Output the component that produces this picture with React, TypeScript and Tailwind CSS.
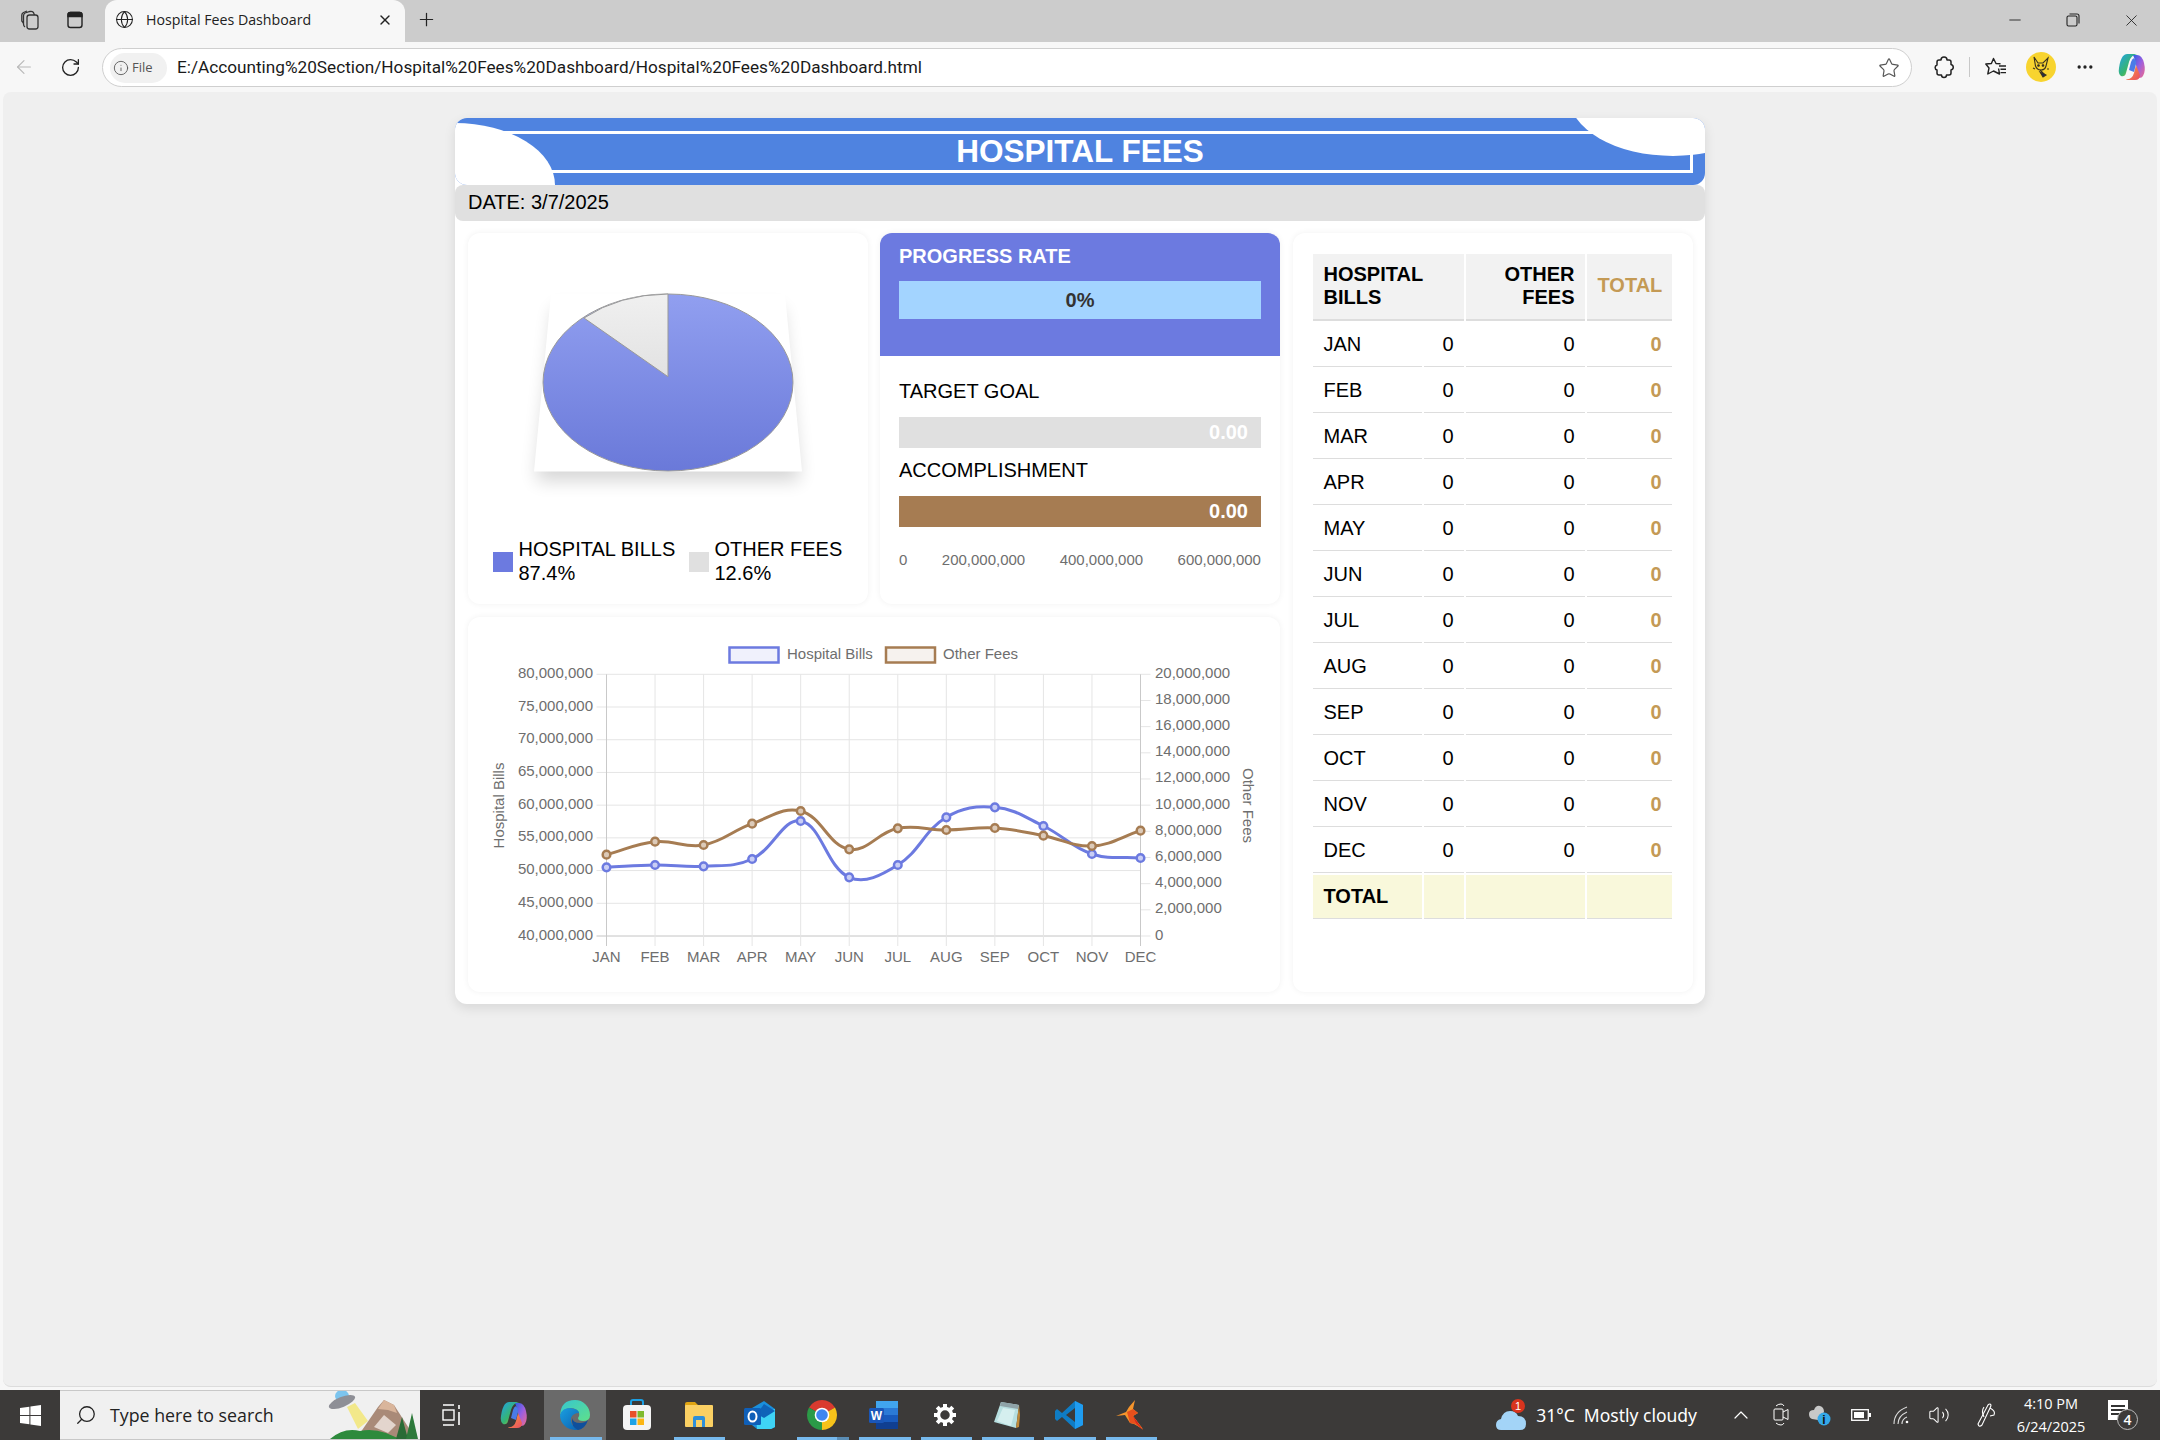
import React from "react";
import { ArrowLeft, RotateCw, Globe, X, Plus, Minus, Info, Star, MoreHorizontal, Search, ChevronUp, Volume2 } from "lucide-react";

const MONTHS = ["JAN", "FEB", "MAR", "APR", "MAY", "JUN", "JUL", "AUG", "SEP", "OCT", "NOV", "DEC"];

const OX = 468;
const OY = 617;
const PL = 606.5;
const PR = 1140.5;
const PT = 674.3;
const PB = 936;
const stepX = (PR - PL) / 11;
const blueZ = [742, 735, 739, 717, 603, 772, 735, 592, 562, 618, 702, 714];
const brownZ = [704, 665, 675, 611, 573, 688, 625, 630, 624, 647, 678, 632];

function pts(z: number[]) {
  return z.map((v, i) => ({ x: PL + i * stepX - OX, y: 620 + v / 3 - OY }));
}

function spline(p: { x: number; y: number }[], t = 0.4) {
  const cps = p.map((c, i) => {
    const a = p[Math.max(0, i - 1)];
    const b = p[Math.min(p.length - 1, i + 1)];
    const d01 = Math.hypot(c.x - a.x, c.y - a.y);
    const d12 = Math.hypot(b.x - c.x, b.y - c.y);
    const s = d01 + d12 || 1;
    return {
      px: c.x - (t * d01 / s) * (b.x - a.x),
      py: c.y - (t * d01 / s) * (b.y - a.y),
      nx: c.x + (t * d12 / s) * (b.x - a.x),
      ny: c.y + (t * d12 / s) * (b.y - a.y),
    };
  });
  let d = `M${p[0].x} ${p[0].y}`;
  for (let i = 1; i < p.length; i++) {
    d += ` C${cps[i - 1].nx} ${cps[i - 1].ny} ${cps[i].px} ${cps[i].py} ${p[i].x} ${p[i].y}`;
  }
  return d;
}

function LineChart() {
  const blue = pts(blueZ);
  const brown = pts(brownZ);
  const left = ["80,000,000", "75,000,000", "70,000,000", "65,000,000", "60,000,000", "55,000,000", "50,000,000", "45,000,000", "40,000,000"];
  const right = ["20,000,000", "18,000,000", "16,000,000", "14,000,000", "12,000,000", "10,000,000", "8,000,000", "6,000,000", "4,000,000", "2,000,000", "0"];
  const l = PL - OX, r = PR - OX, t = PT - OY, b = PB - OY;
  return (
    <svg width="812.5" height="375" viewBox="0 0 812.5 375" className="block" fontSize="15" fill="#6e6e6e">
      <rect x={261.5} y={30.5} width={49} height={15} fill="#f0f1fc" stroke="#6c7ae0" strokeWidth={2.5} />
      <text x={319} y={41.5}>Hospital Bills</text>
      <rect x={418} y={30.5} width={49} height={15} fill="#f6f2ee" stroke="#a67c52" strokeWidth={2.5} />
      <text x={475} y={41.5}>Other Fees</text>
      {left.map((s, i) => {
        const y = t + (i * (b - t)) / 8;
        return (
          <g key={s}>
            <line x1={l - 10} x2={r} y1={y} y2={y} stroke={i === 8 ? "#c4c4c4" : "#e5e5e5"} strokeWidth={1} />
            <text x={125} y={y + 3.5} textAnchor="end">{s}</text>
          </g>
        );
      })}
      {right.map((s, i) => {
        const y = t + (i * (b - t)) / 10;
        return (
          <g key={s}>
            <line x1={r} x2={r + 10} y1={y} y2={y} stroke="#e5e5e5" />
            <text x={687} y={y + 3.5}>{s}</text>
          </g>
        );
      })}
      {MONTHS.map((m, i) => {
        const x = l + i * stepX;
        return (
          <g key={m}>
            <line x1={x} x2={x} y1={t} y2={b + 10} stroke={i === 0 || i === 11 ? "#c9c9c9" : "#e5e5e5"} />
            <text x={x} y={344.5} textAnchor="middle">{m}</text>
          </g>
        );
      })}
      <text transform="translate(36 188.5) rotate(-90)" textAnchor="middle" fontSize="15">Hospital Bills</text>
      <text transform="translate(775 188.5) rotate(90)" textAnchor="middle" fontSize="15">Other Fees</text>
      <path d={spline(blue)} fill="none" stroke="#6c7ae0" strokeWidth={3} />
      <path d={spline(brown)} fill="none" stroke="#a67c52" strokeWidth={3} />
      {blue.map((p, i) => <circle key={i} cx={p.x} cy={p.y} r={3.8} fill="#c9cef5" stroke="#6c7ae0" strokeWidth={2.5} />)}
      {brown.map((p, i) => <circle key={i} cx={p.x} cy={p.y} r={3.8} fill="#dccab8" stroke="#a67c52" strokeWidth={2.5} />)}
    </svg>
  );
}

function Pie() {
  return (
    <svg width="400" height="297" viewBox="0 0 400 297" className="block">
      <defs>
        <linearGradient id="pieBlue" x1="0" y1="0" x2="0" y2="1">
          <stop offset="0" stopColor="#919ff0" />
          <stop offset="1" stopColor="#6a79d9" />
        </linearGradient>
        <linearGradient id="pieGray" x1="0" y1="0" x2="0" y2="1">
          <stop offset="0" stopColor="#f0f0f0" />
          <stop offset="1" stopColor="#e2e2e2" />
        </linearGradient>
        <filter id="pieShadow" x="-30%" y="-30%" width="160%" height="160%">
          <feGaussianBlur stdDeviation="9" />
        </filter>
      </defs>
      <polygon points="86,68 314,68 332,241 68,241" fill="#000" opacity="0.16" filter="url(#pieShadow)" transform="translate(0 7)" />
      <polygon points="83,61 317,61 334,238.5 66,238.5" fill="#fff" />
      <ellipse cx="200" cy="149.5" rx="125" ry="88.5" fill="url(#pieBlue)" stroke="#999" strokeWidth="1" />
      <path d="M200 61 A125 88.5 0 0 0 116 85 L200 143.7 Z" fill="url(#pieGray)" stroke="#999" strokeWidth="1" />
    </svg>
  );
}

function Hospital() {
  return (
    <div className="mx-auto mt-[26px] w-[1250px] rounded-xl bg-white shadow-[0_4px_12px_rgba(0,0,0,0.1)] font-['Liberation_Sans',Arial,sans-serif]">
      <div className="relative overflow-hidden rounded-xl bg-[#4f83e0] h-[67px] pt-[13px] px-[12px]">
        <div className="h-[42px] border-[3px] border-white flex items-center justify-center pb-[1px] text-white font-bold text-[31.5px] leading-none">
          HOSPITAL FEES
        </div>
        <div className="absolute left-[-100px] top-[5px] w-[200px] h-[124px] rounded-[50%] bg-white" />
        <div className="absolute right-[-72px] top-[-82px] w-[208px] h-[120px] rounded-[50%] bg-white" />
      </div>
      <div className="h-[36px] bg-[#e0e0e0] rounded-lg flex items-center pl-[13px] pb-[3px] text-[20px] text-black">DATE: 3/7/2025</div>
      <div className="grid grid-cols-[400px_400px_400px] grid-rows-[371px_375px] gap-x-[12.5px] gap-y-[13px] px-[12.5px] pt-[12px] pb-[12px]">
        <div className="rounded-xl bg-white shadow-[0_0_6px_rgba(0,0,0,0.06)]">
          <Pie />
          <div className="flex items-center pl-[25px] mt-[7px] text-[20px] leading-[24px] text-black">
            <span className="w-[20px] h-[20px] bg-[#6c7ae0] mr-[6px] mt-[2px]" />
            <span className="w-[155px] whitespace-nowrap">HOSPITAL BILLS<br />87.4%</span>
            <span className="w-[20px] h-[20px] bg-[#e0e0e0] ml-[15px] mr-[6px] mt-[2px]" />
            <span className="whitespace-nowrap">OTHER FEES<br />12.6%</span>
          </div>
        </div>

        <div className="rounded-xl bg-white shadow-[0_0_6px_rgba(0,0,0,0.06)] overflow-hidden">
          <div className="bg-[#6c7ae0] h-[123px] px-[19px] pt-[11.5px]">
            <div className="text-white font-bold text-[20px] leading-[23px]">PROGRESS RATE</div>
            <div className="mt-[13.5px] h-[38px] bg-[#a3d4ff] flex items-center justify-center text-[#333] font-bold text-[20px]">0%</div>
          </div>
          <div className="px-[19px] pt-[23.5px] text-black text-[20px] leading-[23px]">
            <div>TARGET GOAL</div>
            <div className="mt-[14.5px] h-[31px] bg-[#e0e0e0] flex items-center justify-end pr-[13px] pb-[1px] text-white font-bold">0.00</div>
            <div className="mt-[11px]">ACCOMPLISHMENT</div>
            <div className="mt-[14px] h-[31px] bg-[#a67c52] flex items-center justify-end pr-[13px] pb-[1px] text-white font-bold">0.00</div>
            <div className="mt-[24px] flex justify-between text-[15px] leading-[17px] text-[#6e6e6e]">
              <span>0</span><span>200,000,000</span><span>400,000,000</span><span>600,000,000</span>
            </div>
          </div>
        </div>

        <div className="row-span-2 rounded-xl bg-white shadow-[0_0_6px_rgba(0,0,0,0.06)] pl-[18px] pt-[19px]">
          <table className="w-[363px] table-fixed border-separate border-spacing-[2px] text-[20px] leading-[23px] text-black">
            <colgroup>
              <col className="w-[109px]" /><col className="w-[40px]" /><col className="w-[119px]" /><col className="w-[85px]" />
            </colgroup>
            <thead>
              <tr className="bg-[#f2f2f2] font-bold">
                <th colSpan={2} className="px-[11px] pt-[8.5px] pb-[10.5px] text-left border-b-2 border-[#ddd]">HOSPITAL<br />BILLS</th>
                <th className="pl-[11px] pr-[10px] pt-[8.5px] pb-[10.5px] text-right border-b-2 border-[#ddd]">OTHER<br />FEES</th>
                <th className="pl-[11px] pr-[10.5px] pt-[8.5px] pb-[10.5px] text-right border-b-2 border-[#ddd] text-[#c49a55]">TOTAL</th>
              </tr>
            </thead>
            <tbody>
              {MONTHS.map((m) => (
                <tr key={m}>
                  <td className="px-[11px] pt-[9.5px] pb-[10.5px] border-b border-[#ddd]">{m}</td>
                  <td className="pl-[11px] pr-[10px] pt-[9.5px] pb-[10.5px] border-b border-[#ddd] text-right">0</td>
                  <td className="pl-[11px] pr-[10px] pt-[9.5px] pb-[10.5px] border-b border-[#ddd] text-right">0</td>
                  <td className="pl-[11px] pr-[10px] pt-[9.5px] pb-[10.5px] border-b border-[#ddd] text-right font-bold text-[#c49a55]">0</td>
                </tr>
              ))}
              <tr className="bg-[#f9f8db] font-bold">
                <td className="px-[11px] pt-[9.5px] pb-[10.5px] border-b border-[#ddd]">TOTAL</td>
                <td className="py-[10px] border-b border-[#ddd]" />
                <td className="py-[10px] border-b border-[#ddd]" />
                <td className="py-[10px] border-b border-[#ddd]" />
              </tr>
            </tbody>
          </table>
        </div>

        <div className="col-span-2 rounded-xl bg-white shadow-[0_0_6px_rgba(0,0,0,0.06)] overflow-hidden">
          <LineChart />
        </div>
      </div>
    </div>
  );
}

function Workspaces() {
  return (
    <svg width="22" height="22" viewBox="0 0 22 22" fill="none" stroke="#333" strokeWidth="1.3">
      <rect x="8" y="6" width="11" height="14" rx="2.5" />
      <path d="M6 18 Q4.5 17 4.5 15 V7 Q4.5 5 6 4 L11 2.5 Q13 2 14.5 3.5 L15.5 6" />
      <path d="M4.5 14 L2.8 12 V6 Q2.8 4.5 4.5 3.5 L8 2" />
    </svg>
  );
}
function VerticalTabs() {
  return (
    <svg width="20" height="20" viewBox="0 0 20 20" fill="none" stroke="#222" strokeWidth="1.4">
      <rect x="3" y="2.5" width="14" height="15" rx="2.5" />
      <path d="M3 5 Q3 2.5 5.5 2.5 H14.5 Q17 2.5 17 5 V6.5 H3 Z" fill="#222" />
    </svg>
  );
}
function Restore() {
  return (
    <svg width="14" height="14" viewBox="0 0 14 14" fill="none" stroke="#222" strokeWidth="1.1">
      <rect x="1" y="3" width="10" height="10" rx="1.5" />
      <path d="M3.5 1 H11 Q13 1 13 3 V10.5" />
    </svg>
  );
}
function PuzzleIcon() {
  return (
    <svg width="24" height="24" viewBox="0 0 24 24" fill="none" stroke="#222" strokeWidth="1.5" strokeLinejoin="round">
      <path d="M9 5 A3 3 0 0 1 15 5 H17 A2 2 0 0 1 19 7 V9.5 A2.8 2.8 0 0 1 19 15 V18 A2 2 0 0 1 17 20 H14.5 A2.5 2.5 0 0 1 9.5 20 H7 A2 2 0 0 1 5 18 V15 A2.6 2.6 0 0 1 5 10 V7 A2 2 0 0 1 7 5 Z" />
    </svg>
  );
}
function FavBar() {
  return (
    <svg width="22" height="20" viewBox="0 0 22 20" fill="none" stroke="#222" strokeWidth="1.4" strokeLinejoin="round">
      <path d="M13.6 11.5 L14.5 17 L8.5 14 L2.8 17 L4 11 L0.8 7 L6.4 6.5 L8.5 1.5 L11 6.5 L15.5 6.8" />
      <path d="M14 9 H21 M15.5 12.3 H21 M15.5 15.6 H21" />
    </svg>
  );
}
function Avatar() {
  return (
    <div className="w-[30px] h-[30px] rounded-full bg-[#f8d42f] flex items-center justify-center">
      <svg width="22" height="24" viewBox="0 0 22 24" fill="none" stroke="#3a3320" strokeWidth="1.1">
        <path d="M4 2 L8 8 H13 L18 3 L16 11 Q15 15 11 15 Q7 15 5.5 11 Z" />
        <circle cx="8.5" cy="10.5" r="0.8" fill="#222" />
        <circle cx="13" cy="10.5" r="0.8" fill="#222" />
        <path d="M10 15 L15 20 M3 13 L5 14 M19 14 L17 14" />
        <path d="M10 17 L13 22 L16 20 Z" fill="#1c2b55" />
      </svg>
    </div>
  );
}
function CopilotLogo({ size = 28, uid }: { size?: number; uid: string }) {
  return (
    <svg width={size} height={size} viewBox="0 0 28 28">
      <defs>
        <linearGradient id={uid + "a"} x1="0" y1="0" x2="1" y2="1">
          <stop offset="0" stopColor="#1fa2e8" /><stop offset="0.55" stopColor="#37b56e" /><stop offset="1" stopColor="#f2c32c" />
        </linearGradient>
        <linearGradient id={uid + "b"} x1="0" y1="0" x2="1" y2="1">
          <stop offset="0" stopColor="#2a5fe6" /><stop offset="0.5" stopColor="#9a5fe0" /><stop offset="1" stopColor="#f06a8c" />
        </linearGradient>
        <linearGradient id={uid + "c"} x1="0" y1="0" x2="1" y2="1">
          <stop offset="0" stopColor="#f9a13b" /><stop offset="1" stopColor="#ea4d62" />
        </linearGradient>
      </defs>
      <path d="M9 1 H19 Q13 2 11 9 L8 20 Q7 24 3 23 Q0 21 1 15 Q2 7 5 3 Q7 1 9 1 Z" fill={`url(#${uid}a)`} />
      <path d="M15 2 H19 Q24 2 26 10 Q28 18 25 23 Q24 25 21 25 L17 8 Q16 4 15 2 Z" fill={`url(#${uid}b)`} />
      <path d="M8 26 Q14 27 16 20 L18 12 L22 22 Q22 27 17 27 H9 Z" fill={`url(#${uid}c)`} />
      <path d="M13 9 Q14 6 16 5 Q18 7 18 11 L16 19 L11 17 Z" fill="#4a7be8" />
    </svg>
  );
}
function WindowsLogo() {
  return (
    <svg width="21" height="21" viewBox="0 0 21 21" fill="#fff">
      <polygon points="0,3 9.4,1.7 9.4,10 0,10" /><polygon points="10.4,1.5 21,0 21,10 10.4,10" />
      <polygon points="0,11 9.4,11 9.4,19.3 0,18" /><polygon points="10.4,11 21,11 21,21 10.4,19.5" />
    </svg>
  );
}
function SearchArt() {
  return (
    <svg width="92" height="50" viewBox="0 0 92 50">
      <polygon points="19,18 27,14 40,32 30,40" fill="#f2e88a" />
      <ellipse cx="14" cy="7" rx="7" ry="6" fill="#7cc4ee" />
      <ellipse cx="14" cy="13" rx="14" ry="5" fill="#8e8f96" transform="rotate(-22 14 13)" />
      <polygon points="28,50 50,18 56,11 66,16 84,44 78,50" fill="#a98a78" />
      <polygon points="50,20 56,11 66,16 69,24 60,21" fill="#d9b59b" />
      <polygon points="46,38 56,26 68,36 60,44" fill="#e3d5cd" />
      <path d="M2 50 Q16 38 32 42 Q44 39 58 44 L72 50 Z" fill="#2d8a3c" />
      <polygon points="68,50 74,28 80,50" fill="#2a6b36" />
      <polygon points="78,50 84,24 90,50" fill="#2e7a3c" />
    </svg>
  );
}
function TaskView() {
  return (
    <svg width="20" height="24" viewBox="0 0 20 24" fill="none" stroke="#fff" strokeWidth="1.4">
      <path d="M1 2 H12 M1 22 H12" /><rect x="1" y="7" width="11" height="10" />
      <path d="M17 2 V6 M17 9 V22" strokeWidth="1.6" />
    </svg>
  );
}
function EdgeLogo() {
  return (
    <svg width="32" height="32" viewBox="0 0 32 32">
      <defs>
        <linearGradient id="e1" x1="0" y1="0" x2="1" y2="1"><stop offset="0" stopColor="#36c6d0" /><stop offset="1" stopColor="#5fe08a" /></linearGradient>
        <linearGradient id="e2" x1="0" y1="0" x2="1" y2="1"><stop offset="0" stopColor="#1a9fe0" /><stop offset="1" stopColor="#0b5fb0" /></linearGradient>
      </defs>
      <path d="M16 1 A15 15 0 0 1 31 16 Q31 22 24 22 Q19 22 19 19 Q22 15 18 11 Q12 7 5 11 Q2 13 1 16 Q2 1 16 1 Z" fill="url(#e1)" />
      <path d="M1 16 Q3 9 11 9 Q20 10 20 14 Q14 14 12 19 Q11 25 17 29 Q21 31 22 30 Q19 31 16 31 A15 15 0 0 1 1 16 Z" fill="url(#e2)" />
      <path d="M13 19 Q14 24 21 24 Q26 24 29 21 Q26 30 19 31 Q12 28 13 19 Z" fill="#0f4f9c" />
    </svg>
  );
}
function StoreLogo() {
  return (
    <svg width="30" height="32" viewBox="0 0 30 32">
      <path d="M9 7 V3 Q9 1 11 1 H19 Q21 1 21 3 V7" fill="none" stroke="#1ca0e4" strokeWidth="2" />
      <rect x="1" y="6" width="28" height="25" rx="4" fill="#f4f4f4" />
      <rect x="8" y="12" width="6.5" height="6.5" fill="#e8512c" /><rect x="15.5" y="12" width="6.5" height="6.5" fill="#7fba2c" />
      <rect x="8" y="19.5" width="6.5" height="6.5" fill="#1ea3e6" /><rect x="15.5" y="19.5" width="6.5" height="6.5" fill="#fcb614" />
    </svg>
  );
}
function FolderLogo() {
  return (
    <svg width="30" height="28" viewBox="0 0 30 28">
      <path d="M1 3 Q1 1 3 1 H11 L14 4 H13 V8 H1 Z" fill="#e0a412" />
      <rect x="1" y="4" width="28" height="22" rx="1" fill="#fbd063" />
      <path d="M9 26 V17 Q9 15 11 15 H19 Q21 15 21 17 V26 H18 V19 H12 V26 Z" fill="#2f8fd8" />
    </svg>
  );
}
function OutlookLogo() {
  return (
    <svg width="32" height="30" viewBox="0 0 32 30">
      <polygon points="8,8 20,1 31,9 31,27 27,29 13,29 8,25" fill="#1a8fdc" />
      <polygon points="12,16 31,9 31,27 27,29 13,29" fill="#3fd3f5" />
      <polygon points="20,4 31,11 20,18 13,14" fill="#0f63b8" />
      <rect x="0" y="8" width="17" height="17" rx="1.5" fill="#0f5fb8" />
      <ellipse cx="8.5" cy="16.5" rx="4" ry="5" fill="none" stroke="#fff" strokeWidth="2" />
    </svg>
  );
}
function ChromeLogo() {
  return (
    <svg width="30" height="30" viewBox="0 0 30 30">
      <path d="M15 15 L2.01 7.5 A15 15 0 0 1 27.99 7.5 Z" fill="#d93a2f" />
      <path d="M15 15 L27.99 7.5 A15 15 0 0 1 15 30 Z" fill="#f6c21a" />
      <path d="M15 15 L15 30 A15 15 0 0 1 2.01 7.5 Z" fill="#2b9a47" />
      <circle cx="15" cy="15" r="7.3" fill="#fff" />
      <circle cx="15" cy="15" r="5.8" fill="#3f86f0" />
    </svg>
  );
}
function WordLogo() {
  return (
    <svg width="30" height="30" viewBox="0 0 30 30">
      <rect x="7" y="1" width="22" height="28" rx="1.5" fill="#2b7ad6" />
      <rect x="7" y="1" width="22" height="7" fill="#41a5ee" />
      <rect x="7" y="15" width="22" height="7" fill="#185abd" />
      <rect x="7" y="22" width="22" height="7" fill="#103f91" />
      <rect x="0" y="8" width="15" height="15" rx="1.5" fill="#1a56b8" />
      <text x="7.5" y="20" textAnchor="middle" fontSize="12" fontWeight="bold" fill="#fff" fontFamily="Liberation Sans">W</text>
    </svg>
  );
}
function Gear() {
  return (
    <svg width="24" height="24" viewBox="0 0 24 24" fill="none" stroke="#fff">
      <circle cx="12" cy="12" r="6.5" strokeWidth="3.5" />
      <g strokeWidth="4">
        <path d="M12 1 V5 M12 19 V23 M1 12 H5 M19 12 H23 M4.2 4.2 L7 7 M17 17 L19.8 19.8 M19.8 4.2 L17 7 M7 17 L4.2 19.8" />
      </g>
    </svg>
  );
}
function NoteLogo() {
  return (
    <svg width="28" height="30" viewBox="0 0 28 30">
      <polygon points="8,2 26,5 23,28 1,22" fill="#b7dfe0" />
      <polygon points="8,2 26,5 25,9 7,6" fill="#8fa3a8" />
      <polygon points="10,8 22,10 18,26 4,21" fill="#d5efef" />
      <polygon points="23,28 26,5 27,15 26,27" fill="#c08a3a" />
    </svg>
  );
}
function VSCodeLogo() {
  return (
    <svg width="30" height="30" viewBox="0 0 30 30">
      <path d="M21 1 L29 5 V25 L21 29 L8 17 L3 21 L1 19 V11 L3 9 L8 13 Z" fill="#0f7cc4" />
      <path d="M21 1 L29 5 V25 L21 29 Z" fill="#1f9cf0" />
      <path d="M21 8 L12 15 L21 22 Z" fill="#3c3a39" />
    </svg>
  );
}
function MatlabLogo() {
  return (
    <svg width="28" height="32" viewBox="0 0 28 32">
      <polygon points="0,17 10,13 13,8 19,1 17,10 22,14 17,17 27,30 18,25 14,24 9,16" fill="#f6952c" />
      <polygon points="11,13 17,10 22,14 17,17 27,31 19,25 14,24" fill="#e8501c" />
      <polygon points="17,17 27,31 20,24" fill="#d8231c" />
    </svg>
  );
}
function Cloud() {
  return (
    <svg width="32" height="36" viewBox="0 0 32 36">
      <path d="M5 33 Q0 33 0 28 Q0 23 5 22 Q7 14 14 14 Q20 14 22 19 Q30 19 30 27 Q30 33 24 33 Z" fill="#a3d4f7" />
      <circle cx="22" cy="9" r="7" fill="#d8341e" />
      <text x="22" y="13" textAnchor="middle" fontSize="11" fill="#fff" fontFamily="Liberation Sans">1</text>
    </svg>
  );
}
function Meet() {
  return (
    <svg width="16" height="24" viewBox="0 0 16 24" fill="none" stroke="#fff" strokeWidth="1">
      <rect x="1" y="6" width="9" height="11" rx="1" /><path d="M10 9 L15 6.5 V16.5 L10 14" />
      <path d="M3 3 Q5 1 8 1 Q10 1 11 3 M3 20 Q5 22 8 22 Q10 22 11 20" />
    </svg>
  );
}
function OneDriveInfo() {
  return (
    <svg width="22" height="24" viewBox="0 0 22 24">
      <path d="M3 16 Q0 15 0 11 Q0 7 5 7 Q7 2 11 3 Q15 4 15 9 L9 17 Z" fill="#c8c8c8" />
      <circle cx="15" cy="16" r="6.5" fill="#35a8e8" />
      <text x="15" y="20.5" textAnchor="middle" fontSize="12" fontWeight="bold" fill="#111" fontFamily="Liberation Sans">i</text>
    </svg>
  );
}
function Battery() {
  return (
    <svg width="20" height="14" viewBox="0 0 20 14" fill="none">
      <rect x="0.7" y="1.7" width="16.6" height="10.6" stroke="#fff" strokeWidth="1.3" />
      <rect x="3" y="4" width="10" height="6" fill="#fff" /><rect x="18" y="5" width="2" height="4" fill="#fff" />
    </svg>
  );
}
function WifiIcon() {
  return (
    <svg width="18" height="20" viewBox="0 0 18 20" fill="none" stroke="#ddd" strokeWidth="1.1">
      <path d="M1 19 Q1 7 14 2 M5 19 Q5 11 14 7 M9 19 Q9 14 14 12" />
      <circle cx="14" cy="17" r="1.3" fill="#fff" stroke="none" />
    </svg>
  );
}
function PenIcon() {
  return (
    <svg width="20" height="26" viewBox="0 0 20 26" fill="none" stroke="#fff" strokeWidth="1.1">
      <path d="M2 22 L12 3 Q14 1 15 3 Q15 4 14 6 L6 23 Q3 26 2 22 Z" />
      <path d="M14 6 Q20 9 18 13 L14 14 M8 15 Q5 9 8 5" />
    </svg>
  );
}
function NotifIcon() {
  return (
    <div className="relative w-[30px] h-[30px]">
      <div className="absolute left-0 top-0 w-[20px] h-[20px] bg-white flex flex-col justify-center gap-[2px] px-[3px]">
        <span className="h-[2px] bg-[#333]" /><span className="h-[2px] bg-[#333]" /><span className="h-[2px] w-[10px] bg-[#333]" />
      </div>
      <div className="absolute left-[9px] top-[9px] w-[21px] h-[21px] rounded-full border border-[#bbb] bg-[#3c3a39] flex items-center justify-center text-[14px] font-semibold text-white">4</div>
    </div>
  );
}

function Slot({ children, on, active, half }: { children: React.ReactNode; on?: boolean; active?: boolean; half?: boolean }) {
  return (
    <div className={`relative w-[61.7px] h-full flex items-center justify-center ${active ? "bg-[#6a6a6a]" : ""}`}>
      {children}
      {(on || active) && <span className="absolute bottom-0 left-[6px] right-[4px] h-[3px] bg-[#76b9ed]" />}
      {half && <span className="absolute bottom-0 left-[46px] right-[4px] h-[3px] bg-[#5a8db5]" />}
    </div>
  );
}

export default function App() {
  return (
    <div className="w-[2160px] h-[1440px] overflow-hidden flex flex-col bg-[#f7f7f7] font-['Open_Sans',sans-serif]">
      <div className="h-[42px] bg-[#cccccc] flex items-end shrink-0">
        <div className="w-[105px] h-[42px] flex items-center pl-[19px] gap-[24px] pb-[2px]">
          <Workspaces /><VerticalTabs />
        </div>
        <div className="w-[300px] h-[42px] bg-[#f7f7f7] rounded-t-xl flex items-center pl-[10px] pb-[3px] text-[#222]">
          <Globe size={19} strokeWidth={1.3} />
          <span className="ml-[12px] text-[14.2px] whitespace-nowrap w-[231px]">Hospital Fees Dashboard</span>
          <X size={16} strokeWidth={2} />
        </div>
        <div className="w-[42px] h-[42px] flex items-center justify-center pb-[3px] text-[#222]"><Plus size={21} strokeWidth={1.4} /></div>
        <div className="ml-auto flex h-[42px] items-center pb-[2px] text-[#222]">
          <div className="w-[58px] flex justify-center"><Minus size={18} strokeWidth={1.2} /></div>
          <div className="w-[58px] flex justify-center"><Restore /></div>
          <div className="w-[58px] flex justify-center mr-0"><X size={19} strokeWidth={1.1} /></div>
        </div>
      </div>

      <div className="h-[50px] shrink-0 flex items-center">
        <div className="w-[102px] flex items-center pl-[13px] gap-[24px]">
          <ArrowLeft size={22} strokeWidth={1.2} className="text-[#b8b8b8]" />
          <RotateCw size={21} strokeWidth={1.5} className="text-[#222] ml-[1px]" />
        </div>
        <div className="w-[1810px] h-[39px] mt-[1px] bg-white border border-[#cfcfcf] rounded-full flex items-center pl-[7px] pr-[11px]">
          <div className="w-[57px] h-[30px] bg-[#f1f1f1] rounded-full flex items-center pl-[3px] gap-[3px] text-[#555]">
            <Info size={16} strokeWidth={1.3} />
            <span className="text-[13px]">File</span>
          </div>
          <span className="ml-[10px] text-[17.2px] text-[#1a1a1a] whitespace-nowrap font-['Roboto',sans-serif]">E:/Accounting%20Section/Hospital%20Fees%20Dashboard/Hospital%20Fees%20Dashboard.html</span>
          <Star size={22} strokeWidth={1.3} className="ml-auto text-[#555]" />
        </div>
        <div className="flex items-center text-[#222] ml-[20px]">
          <PuzzleIcon />
          <div className="w-px h-[20px] bg-[#c8c8c8] ml-[13px] mr-[15px]" />
          <FavBar />
          <div className="ml-[19px]"><Avatar /></div>
          <MoreHorizontal size={20} strokeWidth={2} className="ml-[19px]" />
          <div className="ml-[23px]"><CopilotLogo uid="cpA" /></div>
        </div>
      </div>

      <div className="flex-1 ml-[3px] mr-[3px] mb-[3px] bg-[#efefef] rounded-lg border-b border-[#dcdcdc] overflow-hidden">
        <Hospital />
      </div>

      <div className="h-[50px] shrink-0 bg-[#3c3a39] flex items-center text-white">
        <div className="w-[60px] h-full flex items-center justify-center"><WindowsLogo /></div>
        <div className="relative w-[360px] h-full bg-[#f0f0f0] border-t border-b border-[#c8c8c8] flex items-center pl-[15px] text-[#222] overflow-hidden">
          <Search size={22} strokeWidth={1.4} className="-scale-x-100" />
          <span className="ml-[13px] text-[17.8px] whitespace-nowrap">Type here to search</span>
          <div className="absolute right-0 bottom-0"><SearchArt /></div>
        </div>
        <div className="flex h-full ml-[1px]">
          <Slot><TaskView /></Slot>
          <Slot><CopilotLogo uid="cpB" /></Slot>
          <Slot active><EdgeLogo /></Slot>
          <Slot><StoreLogo /></Slot>
          <Slot on><FolderLogo /></Slot>
          <Slot><OutlookLogo /></Slot>
          <Slot on half><ChromeLogo /></Slot>
          <Slot on><WordLogo /></Slot>
          <Slot on><Gear /></Slot>
          <Slot on><NoteLogo /></Slot>
          <Slot on><VSCodeLogo /></Slot>
          <Slot on><MatlabLogo /></Slot>
        </div>
        <div className="ml-auto flex items-center h-full">
          <Cloud />
          <span className="ml-[8px] text-[17.5px] whitespace-nowrap font-['Noto_Sans',sans-serif]">31°C&nbsp; Mostly cloudy</span>
          <ChevronUp size={24} strokeWidth={1.2} className="ml-[32px]" />
          <div className="ml-[20.3px]"><Meet /></div>
          <div className="ml-[20px]"><OneDriveInfo /></div>
          <div className="ml-[19.3px]"><Battery /></div>
          <div className="ml-[22.4px]"><WifiIcon /></div>
          <Volume2 size={22} strokeWidth={1.1} className="ml-[17.3px]" />
          <div className="ml-[25.3px]"><PenIcon /></div>
          <div className="ml-[15.4px] w-[80px] flex flex-col items-center text-[14.5px] leading-[23px]">
            <span>4:10 PM</span><span>6/24/2025</span>
          </div>
          <div className="ml-[17px] mr-[22px]"><NotifIcon /></div>
        </div>
      </div>
    </div>
  );
}
